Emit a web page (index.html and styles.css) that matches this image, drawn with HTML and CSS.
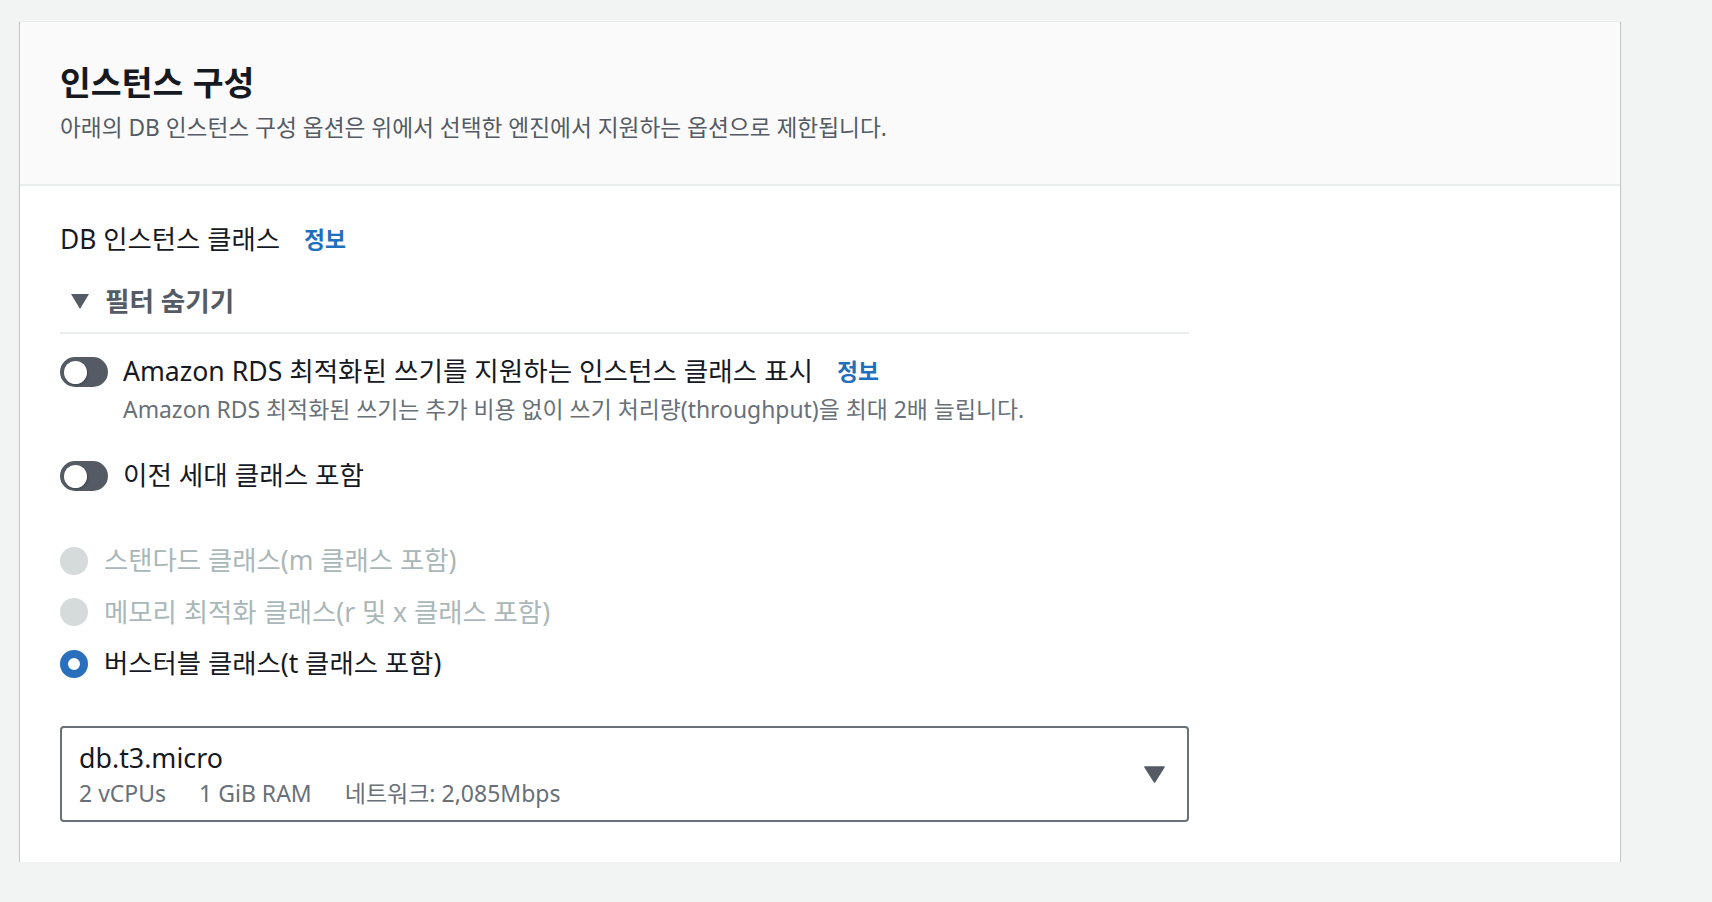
FILE: index.html
```html
<!DOCTYPE html>
<html lang="ko">
<head>
<meta charset="utf-8">
<title>인스턴스 구성</title>
<link rel="stylesheet" href="styles.css">
</head>
<body>
<div class="page">
  <section class="card">
    <header class="card-header">
      <h2 class="title">인스턴스 구성</h2>
      <p class="subtitle">아래의 DB 인스턴스 구성 옵션은 위에서 선택한 엔진에서 지원하는 옵션으로 제한됩니다.</p>
    </header>
    <div class="card-body">
      <div class="field-label">DB 인스턴스 클래스<a class="info">정보</a></div>

      <div class="filter-head">
        <svg class="filter-caret" width="20" height="17" viewBox="0 0 20 17"><path d="M1 1 H19 L10 16 Z" fill="#545b64"/></svg>
        <span>필터 숨기기</span>
      </div>

      <div class="toggle-row first">
        <span class="toggle"><span class="knob"></span></span>
        <div class="toggle-text">
          <div class="toggle-label">Amazon RDS 최적화된 쓰기를 지원하는 인스턴스 클래스 표시<a class="info">정보</a></div>
          <div class="toggle-desc">Amazon RDS 최적화된 쓰기는 추가 비용 없이 쓰기 처리량(throughput)을 최대 2배 늘립니다.</div>
        </div>
      </div>

      <div class="toggle-row second">
        <span class="toggle"><span class="knob"></span></span>
        <div class="toggle-text">
          <div class="toggle-label">이전 세대 클래스 포함</div>
        </div>
      </div>

      <div class="radio-group">
        <div class="radio disabled"><span class="radio-dot"></span><span class="radio-label">스탠다드 클래스(m 클래스 포함)</span></div>
        <div class="radio disabled"><span class="radio-dot"></span><span class="radio-label">메모리 최적화 클래스(r 및 x 클래스 포함)</span></div>
        <div class="radio checked"><span class="radio-dot"></span><span class="radio-label">버스터블 클래스(t 클래스 포함)</span></div>
      </div>

      <div class="select">
        <div class="select-text">
          <div class="select-title">db.t3.micro</div>
          <div class="select-tags"><span>2 vCPUs</span><span>1 GiB RAM</span><span>네트워크: 2,085Mbps</span></div>
        </div>
        <svg class="select-caret" width="21" height="17" viewBox="0 0 21 17"><path d="M1 1 H20 L10.5 16 Z" fill="#545b64" stroke="#545b64" stroke-width="1.5" stroke-linejoin="round"/></svg>
      </div>
    </div>
  </section>
</div>
</body>
</html>
```

FILE: styles.css
```css
html, body {
  margin: 0;
  padding: 0;
  background: #f2f3f3;
  font-family: "Noto Sans", "Noto Sans CJK KR", sans-serif;
  color: #16191f;
}

.page {
  padding: 21px 0 0 20px;
}

.card {
  width: 1600px;
  background: #ffffff;
  box-shadow: 0 1px 1px 0 rgba(0, 28, 36, 0.3), 1px 1px 1px 0 rgba(0, 28, 36, 0.15), -1px 1px 1px 0 rgba(0, 28, 36, 0.15);
  border-top: 1px solid #eaeded;
}

.card-header {
  background: #fafafa;
  border-bottom: 2px solid #eaeded;
  padding: 40px 40px 40px;
}

.title {
  margin: 0;
  font-family: "Noto Sans CJK KR", sans-serif;
  font-size: 33.5px;
  line-height: 38px;
  font-weight: 700;
  color: #16191f;
}

.subtitle {
  margin: 11px 0 0;
  font-size: 22.7px;
  line-height: 33px;
  color: #545b64;
}

.card-body {
  padding: 36px 40px 40px;
}

.field-label {
  font-size: 26.4px;
  line-height: 35px;
  display: flex;
  align-items: center;
}

.info {
  color: #1f6fbf;
  font-weight: 700;
  font-size: 22.8px;
  margin-left: 24px;
  text-decoration: none;
}

.filter-head {
  width: 1129px;
  margin-top: 27px;
  padding-bottom: 13px;
  border-bottom: 2px solid #eaeded;
  display: flex;
  align-items: center;
  font-size: 26.6px;
  line-height: 35px;
  font-weight: 700;
  color: #545b64;
}

.filter-caret {
  margin-left: 10px;
  margin-right: 15px;
}

.toggle-row {
  display: flex;
  align-items: flex-start;
}

.toggle-row.first {
  margin-top: 20px;
}

.toggle-row.second {
  margin-top: 32px;
}

.toggle {
  width: 48px;
  height: 30px;
  border-radius: 15px;
  background: #545b64;
  margin-top: 3px;
  margin-right: 15px;
  position: relative;
  flex: none;
}

.knob {
  position: absolute;
  left: 4px;
  top: 3.5px;
  width: 23px;
  height: 23px;
  border-radius: 50%;
  background: #ffffff;
  box-shadow: 1px 1px 2px rgba(0, 0, 0, 0.25);
}

.toggle-label {
  font-size: 26.6px;
  line-height: 35px;
  display: flex;
  align-items: center;
}

.toggle-desc {
  margin-top: 4px;
  font-size: 22.9px;
  line-height: 33px;
  color: #687078;
}

.radio-group {
  margin-top: 50px;
  display: flex;
  flex-direction: column;
  gap: 16.5px;
}

.radio {
  display: flex;
  align-items: center;
  font-size: 26.4px;
  line-height: 35px;
}

.radio-dot {
  width: 28px;
  height: 28px;
  border-radius: 50%;
  margin-right: 16px;
  flex: none;
  box-sizing: border-box;
}

.radio.disabled .radio-dot {
  background: #d5dbdb;
}

.radio.disabled .radio-label {
  color: #aab7b8;
}

.radio.checked .radio-dot {
  background: #ffffff;
  border: 8.5px solid #2a6fbd;
}

.select {
  margin-top: 45px;
  width: 1129px;
  box-sizing: border-box;
  height: 96px;
  border: 2px solid #687078;
  border-radius: 4px;
  padding: 12px 22px 0 17px;
  display: flex;
  align-items: flex-start;
  justify-content: space-between;
}

.select-title {
  font-size: 26.8px;
  line-height: 35px;
}

.select-tags {
  margin-top: 2px;
  font-size: 23px;
  line-height: 33px;
  color: #687078;
  display: flex;
  gap: 33px;
}

.select-caret {
  margin-top: 26px;
}
```
